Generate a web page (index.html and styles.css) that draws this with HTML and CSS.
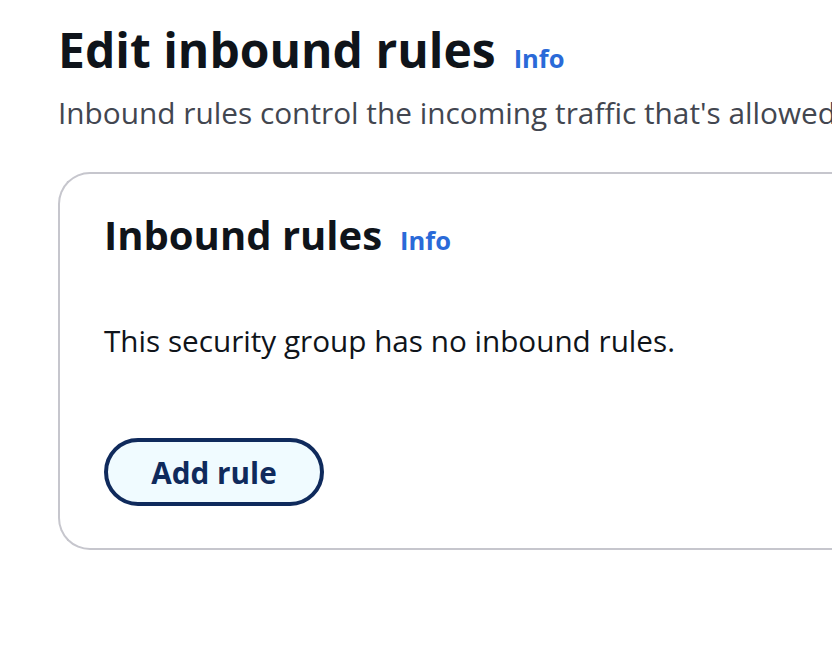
FILE: index.html
```html
<!DOCTYPE html>
<html>
<head>
<meta charset="utf-8">
<link rel="stylesheet" href="styles.css">
</head>
<body>
<main class="page">
  <header class="page-header">
    <div class="title-row">
      <h1 class="title">Edit inbound rules</h1>
      <a class="info" href="#">Info</a>
    </div>
    <p class="description">Inbound rules control the incoming traffic that's allowed to reach the instance.</p>
  </header>
  <section class="card">
    <div class="card-title-row">
      <h2 class="card-title">Inbound rules</h2>
      <a class="info" href="#">Info</a>
    </div>
    <p class="empty">This security group has no inbound rules.</p>
    <button class="btn">Add rule</button>
  </section>
</main>
</body>
</html>
```
FILE: styles.css
```css
html, body {
  margin: 0;
  padding: 0;
  background: #ffffff;
}
body {
  font-family: "Open Sans", "Noto Sans", sans-serif;
  color: #0f141a;
  overflow: hidden;
  width: 832px;
  height: 652px;
}
.page {
  padding: 20px 0 0 58px;
  overflow: hidden;
}
.title-row {
  display: flex;
  align-items: baseline;
  gap: 18px;
}
.title {
  margin: 0;
  font-size: 48px;
  line-height: 60px;
  font-weight: 700;
  color: #0f141a;
  white-space: nowrap;
}
.info {
  font-size: 25.5px;
  font-weight: 700;
  color: #2a6ad8;
  text-decoration: none;
}
.description {
  margin: 13px 0 0;
  font-size: 29.8px;
  line-height: 40px;
  color: #424650;
  white-space: nowrap;
  overflow: hidden;
}
.card {
  margin-top: 39px;
  width: 840px;
  height: 378px;
  box-sizing: border-box;
  border: 2px solid #c6c6cd;
  border-right: none;
  border-radius: 32px 0 0 32px;
  padding: 33px 0 0 44px;
}
.card-title-row {
  display: flex;
  align-items: baseline;
  gap: 18px;
}
.card-title {
  margin: 0;
  font-size: 40px;
  line-height: 56px;
  font-weight: 700;
}
.empty {
  margin: 58px 0 0;
  font-size: 29.7px;
  line-height: 40px;
  color: #0f141a;
}
.btn {
  margin-top: 77px;
  width: 220px;
  height: 68px;
  border: 4px solid #0f2a5c;
  border-radius: 34px;
  background: #f0fbff;
  color: #0f2a5c;
  font-family: "Open Sans", "Noto Sans", sans-serif;
  font-size: 29.7px;
  font-weight: 700;
  padding: 0;
}
```
